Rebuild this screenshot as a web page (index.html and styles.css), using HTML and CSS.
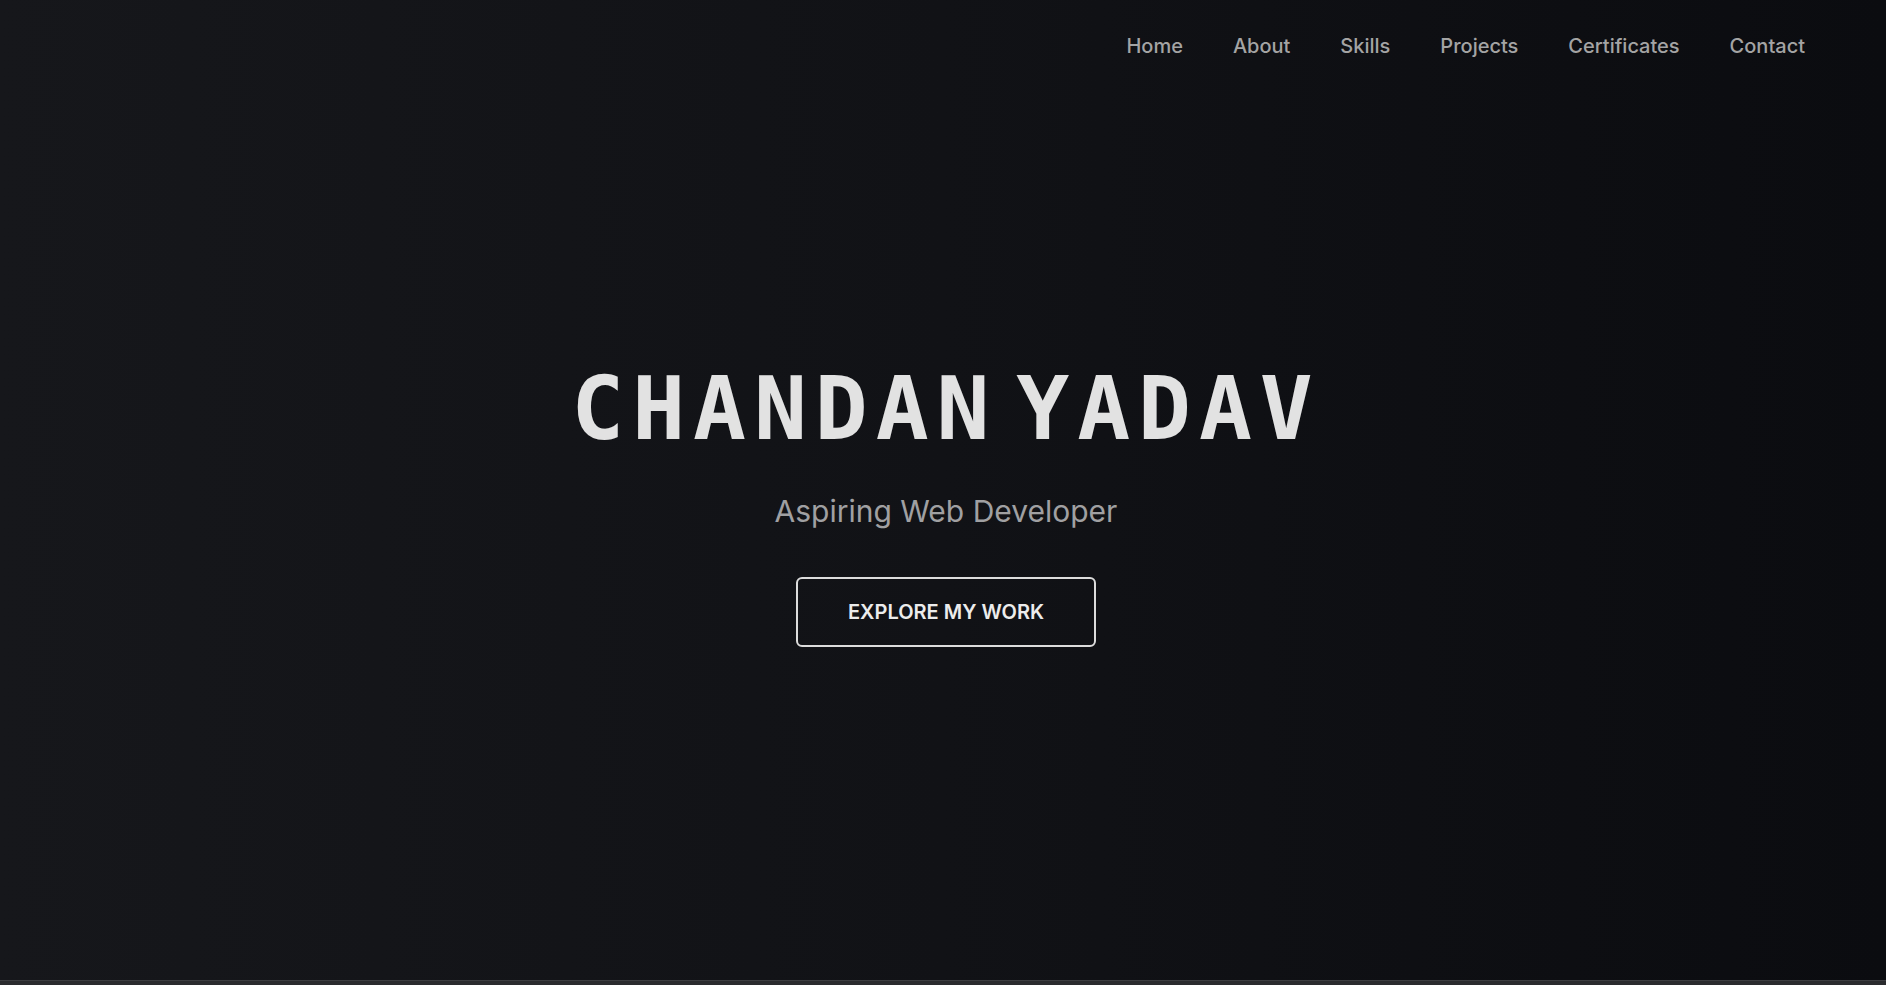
FILE: index.html
```html
<!DOCTYPE html>
<html lang="en">
<head>
<meta charset="utf-8">
<title>Chandan Yadav</title>
<link rel="stylesheet" href="styles.css">
</head>
<body>
<section class="hero">
  <header class="navbar">
    <nav class="nav-links">
      <a href="#home">Home</a>
      <a href="#about">About</a>
      <a href="#skills">Skills</a>
      <a href="#projects">Projects</a>
      <a href="#certificates">Certificates</a>
      <a href="#contact">Contact</a>
    </nav>
  </header>
  <div class="hero-content">
    <h1 class="hero-title">CHANDAN YADAV</h1>
    <p class="hero-subtitle">Aspiring Web Developer</p>
    <a class="hero-button" href="#projects">EXPLORE MY WORK</a>
  </div>
</section>
<section class="next-section"></section>
</body>
</html>
```
FILE: styles.css
```css
html, body {
  margin: 0;
  padding: 0;
}
body {
  background: #2a2b2e;
  font-family: Inter, "Noto Sans", sans-serif;
  overflow: hidden;
}
.hero {
  height: 980px;
  background: linear-gradient(90deg, #16171b 0%, #111216 50%, #0b0c10 100%);
  display: flex;
  flex-direction: column;
}
.navbar {
  display: flex;
  justify-content: flex-end;
  padding: 32px 81px 32px 0;
}
.nav-links {
  display: flex;
  gap: 50px;
}
.nav-links a {
  color: #a4a4a4;
  text-decoration: none;
  font-size: 20px;
  line-height: 28px;
  font-weight: 500;
}
.hero-content {
  display: flex;
  flex-direction: column;
  align-items: center;
  padding-top: 269px;
  padding-left: 6px;
}
.hero-title {
  margin: 0;
  font-family: "DejaVu Sans Mono", "Liberation Mono", monospace;
  font-weight: 700;
  font-size: 88px;
  line-height: 1.1;
  letter-spacing: 7.9px;
  word-spacing: -42px;
  color: #e2e2e2;
}
.hero-subtitle {
  margin: 35px 0 0;
  font-size: 30px;
  line-height: 36px;
  color: #a0a0a2;
}
.hero-button {
  margin-top: 48px;
  padding: 20px 50px;
  border: 2px solid #dcdcdc;
  border-radius: 6px;
  color: #ececec;
  text-decoration: none;
  font-size: 20px;
  line-height: 26px;
  font-weight: 600;
}
.next-section {
  height: 40px;
  border-top: 1px solid #3c3d40;
  background: #2a2b2e;
}
```
